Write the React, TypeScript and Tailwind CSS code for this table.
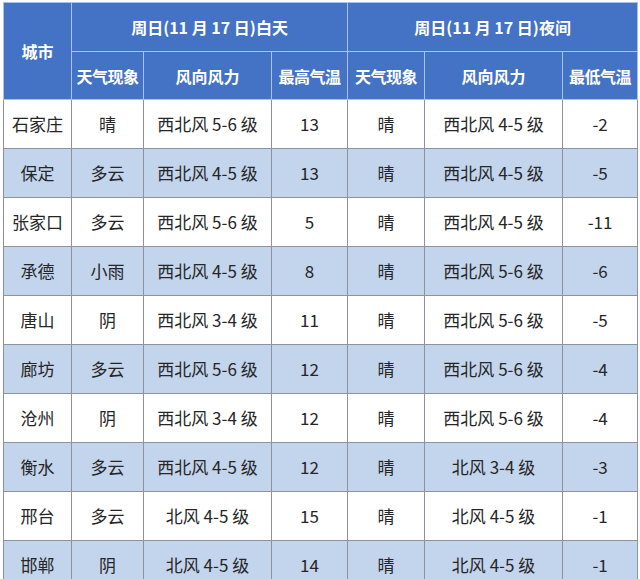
import React from 'react'

const rows = [
  ['石家庄', '晴', '西北风 5-6 级', '13', '晴', '西北风 4-5 级', '-2'],
  ['保定', '多云', '西北风 4-5 级', '13', '晴', '西北风 4-5 级', '-5'],
  ['张家口', '多云', '西北风 5-6 级', '5', '晴', '西北风 4-5 级', '-11'],
  ['承德', '小雨', '西北风 4-5 级', '8', '晴', '西北风 5-6 级', '-6'],
  ['唐山', '阴', '西北风 3-4 级', '11', '晴', '西北风 5-6 级', '-5'],
  ['廊坊', '多云', '西北风 5-6 级', '12', '晴', '西北风 5-6 级', '-4'],
  ['沧州', '阴', '西北风 3-4 级', '12', '晴', '西北风 5-6 级', '-4'],
  ['衡水', '多云', '西北风 4-5 级', '12', '晴', '北风 3-4 级', '-3'],
  ['邢台', '多云', '北风 4-5 级', '15', '晴', '北风 4-5 级', '-1'],
  ['邯郸', '阴', '北风 4-5 级', '14', '晴', '北风 4-5 级', '-1'],
]

const widths = [68, 72, 128, 76, 77, 138, 75]

export default function App() {
  return (
    <div className="w-[640px] h-[579px] overflow-hidden bg-white pl-[3px] pt-[2px]"
      style={{ fontFamily: '"Noto Sans CJK SC", "Noto Sans", sans-serif' }}>
      <table className="table-fixed border-collapse w-[634px]">
        <colgroup>
          {widths.map((w, i) => (
            <col key={i} style={{ width: w }} />
          ))}
        </colgroup>
        <thead className="bg-[#4472c4] text-white font-bold text-[16px]">
          <tr className="h-[49px]">
            <th rowSpan={2} className="border border-[#a8c3ea] font-bold">城市</th>
            <th colSpan={3} className="border border-[#a8c3ea] font-bold">周日(11 月 17 日)白天</th>
            <th colSpan={3} className="border border-[#a8c3ea] font-bold">周日(11 月 17 日)夜间</th>
          </tr>
          <tr className="h-[48px]">
            <th className="border border-[#a8c3ea] font-bold tracking-[-0.5px]">天气现象</th>
            <th className="border border-[#a8c3ea] font-bold">风向风力</th>
            <th className="border border-[#a8c3ea] font-bold tracking-[-0.5px]">最高气温</th>
            <th className="border border-[#a8c3ea] font-bold tracking-[-0.5px]">天气现象</th>
            <th className="border border-[#a8c3ea] font-bold">风向风力</th>
            <th className="border border-[#a8c3ea] font-bold tracking-[-0.5px]">最低气温</th>
          </tr>
        </thead>
        <tbody className="text-[17px] text-[#262626]">
          {rows.map((r, i) => (
            <tr key={i} className={`h-[49px] ${i % 2 === 1 ? 'bg-[#c3d4ed]' : 'bg-white'}`}>
              {r.map((c, j) => (
                <td key={j} className="border border-[#8d939c] text-center">
                  {c}
                </td>
              ))}
            </tr>
          ))}
        </tbody>
      </table>
    </div>
  )
}
